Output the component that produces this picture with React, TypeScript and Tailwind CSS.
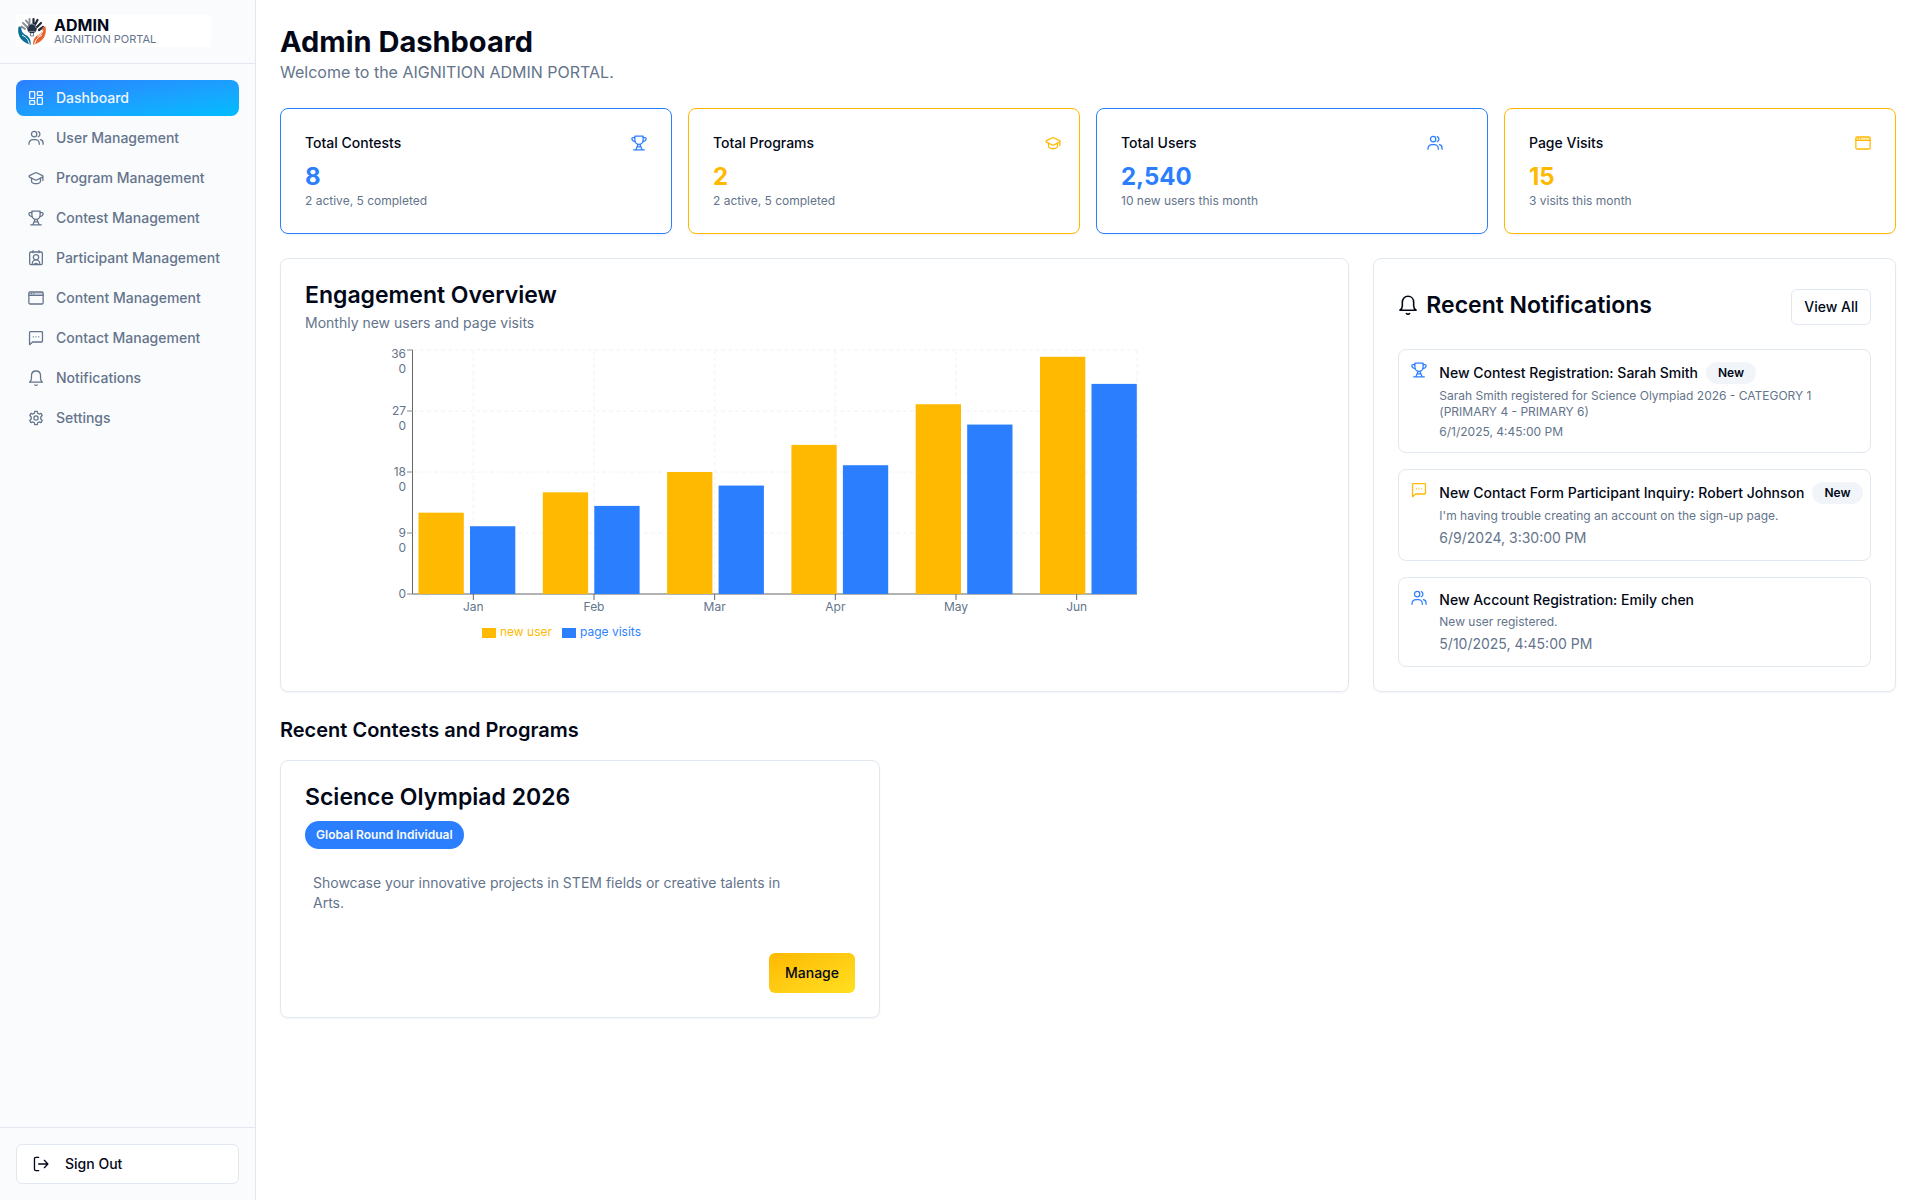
import type { ReactNode } from "react";

type IconProps = { className?: string };

function Icon({ className = "size-4", children }: IconProps & { children: ReactNode }) {
  return (
    <svg
      viewBox="0 0 24 24"
      fill="none"
      stroke="currentColor"
      strokeWidth="1.9"
      strokeLinecap="round"
      strokeLinejoin="round"
      aria-hidden="true"
      className={`shrink-0 ${className}`}
    >
      {children}
    </svg>
  );
}

const DashboardIcon = (p: IconProps) => (
  <Icon {...p}>
    <rect x="2.5" y="2.5" width="7.5" height="10" rx="1" />
    <rect x="14" y="2.5" width="7.5" height="5.5" rx="1" />
    <rect x="14" y="11.5" width="7.5" height="10" rx="1" />
    <rect x="2.5" y="16" width="7.5" height="5.5" rx="1" />
  </Icon>
);

const UsersIcon = (p: IconProps) => (
  <Icon {...p}>
    <circle cx="9.2" cy="6.2" r="4" />
    <path d="M1.5 21.5v-1.2a6 6 0 0 1 6-6h3.4a6 6 0 0 1 6 6v1.2" />
    <path d="M15.5 2.4a4.2 4.2 0 0 1 0 7.6M18.6 14.6a5 5 0 0 1 4 5v1.9" />
  </Icon>
);

const CapIcon = (p: IconProps) => (
  <Icon {...p}>
    <path d="M22.3 10.4v5.4M5.3 12.5v4.3c0 1.9 3 3.7 6.7 3.7s6.700-1.800 6.700-3.700v-4.300" />
    <path d="M11 4.200a2.500 2.500 0 0 1 2 0l8.700 4.300c.900.500.900 1.700 0 2.200L13 15a2.500 2.500 0 0 1-2 0L2.300 10.700c-.900-.500-.900-1.700 0-2.200Z" />
  </Icon>
);

const TrophyIcon = (p: IconProps) => (
  <Icon {...p}>
    <path d="M5.800 1.800h12.400v5.400c0 4-2.600 7-6.200 7s-6.200-3-6.200-7Z" />
    <path d="M5.800 3.800H3a1.700 1.700 0 0 0-1.700 1.900C1.500 7.800 3.200 9.500 6 9.800M18.200 3.800H21a1.700 1.700 0 0 1 1.700 1.900c-.2 2.100-1.900 3.800-4.700 4.100" />
    <path d="M10.600 14.200 7.300 22M13.400 14.200l3.300 7.800M4 22.200h16M9.300 17.800h5.400" />
  </Icon>
);

const BadgeIcon = (p: IconProps) => (
  <Icon {...p}>
    <rect x="2.500" y="3" width="19" height="19" rx="1.800" />
    <path d="M7.500 1v3M16.500 1v3" />
    <circle cx="12" cy="11" r="4" />
    <path d="M6.300 21.500v-1.200c0-2.500 1.500-4.300 3.500-5.300M17.700 21.500v-1.200c0-2.500-1.500-4.300-3.500-5.300M8.500 21.500l3.500-1.500 3.500 1.500" />
  </Icon>
);

const WindowIcon = (p: IconProps) => (
  <Icon {...p}>
    <rect x="1.300" y="3" width="21.400" height="18" rx="1.800" />
    <path d="M1.500 8.200h21M5 5.600h.100M8.500 5.600h.100" />
    <path d="M2 5.600h20" strokeWidth="3" opacity="0.350" />
  </Icon>
);

const ChatIcon = (p: IconProps) => (
  <Icon {...p}>
    <path d="M3.500 2.500h17a1.200 1.200 0 0 1 1.200 1.200v13.100a1.200 1.200 0 0 1-1.200 1.200H7l-4.700 4V3.700a1.200 1.200 0 0 1 1.200-1.200Z" />
    <path d="M8 10.300h.100M12 10.300h.100M16 10.300h.100" strokeWidth="2" />
  </Icon>
);

const BellIcon = (p: IconProps) => (
  <Icon {...p}>
    <path d="M2.300 18.300c1.900-1.300 2.900-3 2.900-5.500V8.700C5.200 4.500 8 1.500 12 1.500s6.800 3 6.800 7.200v4.100c0 2.500 1 4.200 2.900 5.500Z" />
    <path d="M10.200 22.300a2.800 2.800 0 0 0 3.600 0" />
  </Icon>
);

const GearIcon = (p: IconProps) => (
  <Icon {...p}>
    <path d="M10.100 1.900h3.800l.600 3 2.100 1.200 2.900-1 1.900 3.300-2.300 2v3.200l2.300 2-1.900 3.300-2.900-1-2.100 1.200-.600 3h-3.800l-.600-3-2.100-1.200-2.900 1-1.900-3.300 2.300-2v-3.200l-2.300-2 1.900-3.300 2.900 1 2.100-1.200Z" />
    <circle cx="12" cy="12" r="3.200" />
  </Icon>
);

const SignOutIcon = (p: IconProps) => (
  <Icon {...p}>
    <path d="M8.500 2H4.200a2 2 0 0 0-2 2v16a2 2 0 0 0 2 2h4.300M8.500 12H22M17 6.500l5.300 5.500-5.300 5.500" strokeWidth="2" />
  </Icon>
);

function Logo() {
  return (
    <svg viewBox="0 0 32 32" className="size-8 shrink-0" aria-hidden="true">
      <g fill="none" stroke="#8b8f98" strokeWidth="2" strokeLinecap="round">
        <path d="M5.500 11.500 9 14M7 8l4 4M10 5.500l3.500 4.500M13.500 4v4" />
      </g>
      <g fill="none" stroke="#1f2937" strokeWidth="2.200" strokeLinecap="round">
        <path d="M17.500 4v4M21.500 5l-2.500 4.500M25 8l-4 4M27 12l-4 3" />
      </g>
      <circle cx="16" cy="13.500" r="4.800" fill="#263241" />
      <path d="M12 13a4 4 0 0 1 8 0M13 16.500h6M14.500 18v3h3v-3" fill="none" stroke="#7d8794" strokeWidth="1" />
      <path d="M2.600 11.500C.800 19 4 27 14.800 29.800c.300-5.300-1.800-8.500-6-10.300-2.800-1.700-3.700-4.300-3.400-7.500Z" fill="#0e6f96" />
      <path d="M6 20c2.800 1.400 6.500 4 7.300 9" fill="none" stroke="#fff" strokeWidth="1" />
      <path d="M29.400 11.500c1.800 7.500-1.400 15.500-12.200 18.300-.3-5.300 1.800-8.500 6-10.300 2.800-1.700 3.700-4.300 3.400-7.500Z" fill="#e8622a" />
      <path d="M26 20c-2.800 1.400-6.500 4-7.300 9M27 15.500c-1 3-3 4.500-5.500 6" fill="none" stroke="#fff" strokeWidth="1" />
    </svg>
  );
}

const navItems = [
  { label: "Dashboard", icon: DashboardIcon, active: true },
  { label: "User Management", icon: UsersIcon },
  { label: "Program Management", icon: CapIcon },
  { label: "Contest Management", icon: TrophyIcon },
  { label: "Participant Management", icon: BadgeIcon },
  { label: "Content Management", icon: WindowIcon },
  { label: "Contact Management", icon: ChatIcon },
  { label: "Notifications", icon: BellIcon },
  { label: "Settings", icon: GearIcon },
];

function Sidebar() {
  return (
    <aside className="flex w-64 shrink-0 flex-col border-r border-[#e2e8f0] bg-[#fafbfd]">
      <div className="border-b border-[#e2e8f0] px-4 pt-[15px] pb-4">
        <div className="mr-7 flex h-8 items-center gap-1.5 bg-white">
          <Logo />
          <div>
            <p className="text-base leading-4 font-bold">ADMIN</p>
            <p className="text-[11px] leading-3 text-[#64748b]">AIGNITION PORTAL</p>
          </div>
        </div>
      </div>
      <nav className="flex flex-1 flex-col gap-1 p-4">
        {navItems.map(({ label, icon: NavIcon, active }) => (
          <a
            key={label}
            href="#"
            aria-current={active ? "page" : undefined}
            className={`flex items-center gap-3 rounded-lg px-3 py-2 text-sm font-medium ${
              active ? "bg-linear-to-br from-[#2b7fff] to-[#00bcff] text-[#f0f6ff]" : "text-[#64748b]"
            }`}
          >
            <NavIcon />
            {label}
          </a>
        ))}
      </nav>
      <div className="border-t border-[#e2e8f0] p-4">
        <button
          type="button"
          className="flex h-10 w-full items-center gap-4 rounded-md border border-[#e2e8f0] bg-white px-4 text-sm font-medium"
        >
          <SignOutIcon />
          Sign Out
        </button>
      </div>
    </aside>
  );
}

const stats = [
  { title: "Total Contests", value: "8", note: "2 active, 5 completed", icon: TrophyIcon, tone: "blue", iconClass: "size-4" },
  { title: "Total Programs", value: "2", note: "2 active, 5 completed", icon: CapIcon, tone: "amber", iconClass: "size-4 -mr-1.5" },
  { title: "Total Users", value: "2,540", note: "10 new users this month", icon: UsersIcon, tone: "blue", iconClass: "size-4 mr-5" },
  { title: "Page Visits", value: "15", note: "3 visits this month", icon: WindowIcon, tone: "amber", iconClass: "size-4" },
];

function StatCards() {
  return (
    <section className="grid grid-cols-4 gap-4">
      {stats.map(({ title, value, note, icon: StatIcon, tone, iconClass }) => {
        const blue = tone === "blue";
        return (
          <div
            key={title}
            className={`rounded-lg border p-6 shadow-xs ${blue ? "border-[#2b7fff] text-[#2b7fff]" : "border-[#ffb900] text-[#ffb900]"}`}
          >
            <div className="flex items-center justify-between pb-2">
              <h2 className="text-sm font-medium text-[#020817]">{title}</h2>
              <StatIcon className={iconClass} />
            </div>
            <p className="text-2xl font-bold">{value}</p>
            <p className="text-xs text-[#64748b]">{note}</p>
          </div>
        );
      })}
    </section>
  );
}

const months = [
  { name: "Jan", users: 120, visits: 100 },
  { name: "Feb", users: 150, visits: 130 },
  { name: "Mar", users: 180, visits: 160 },
  { name: "Apr", users: 220, visits: 190 },
  { name: "May", users: 280, visits: 250 },
  { name: "Jun", users: 350, visits: 310 },
];

const plot = { left: 28, right: 752, top: 5, bottom: 249, max: 360 };

function EngagementChart() {
  const y = (v: number) => plot.bottom - (v / plot.max) * (plot.bottom - plot.top);
  const band = (plot.right - plot.left) / months.length;
  const ticks = [360, 270, 180, 90, 0];
  return (
    <svg
      viewBox="0 0 760 300"
      className="w-full max-w-[760px] text-xs"
      role="img"
      aria-label="New users and page visits per month"
    >
      <g stroke="#f1f2f4" strokeDasharray="4 3">
        {ticks.slice(0, 4).map((t) => (
          <line key={t} x1={plot.left} x2={plot.right} y1={y(t)} y2={y(t)} />
        ))}
        {months.map((m, i) => (
          <line key={m.name} x1={plot.left + band * (i + 0.5)} x2={plot.left + band * (i + 0.5)} y1={plot.top} y2={plot.bottom} />
        ))}
        <line x1={plot.right} x2={plot.right} y1={plot.top} y2={plot.bottom} />
      </g>
      <path d={`M${plot.left - 0.5} ${plot.top}V${plot.bottom}`} stroke="#666" />
      <path d={`M${plot.left} ${plot.bottom}H${plot.right}`} stroke="#999" strokeWidth="1.5" />
      {ticks.map((t) => (
        <g key={t}>
          <line x1={plot.left - 6} x2={plot.left} y1={y(t)} y2={y(t)} stroke="#888" />
          <text x={plot.left - 7} y={y(t) + (t === 360 ? 8 : 4)} textAnchor="end" fill="#64748b">
            <tspan>{t ? t / 10 : 0}</tspan>
            {t > 0 && (
              <tspan x={plot.left - 7} dy="15">
                0
              </tspan>
            )}
          </text>
        </g>
      ))}
      {months.map((m, i) => {
        const x = plot.left + 5.5 + i * 124.3;
        const center = plot.left + band * (i + 0.5);
        return (
          <g key={m.name}>
            <rect x={x} y={y(m.users)} width="45.3" height={plot.bottom - y(m.users)} fill="#ffb900" />
            <rect x={x + 51.5} y={y(m.visits)} width="45.3" height={plot.bottom - y(m.visits)} fill="#2b7fff" />
            <line x1={center} x2={center} y1={plot.bottom} y2={plot.bottom + 6} stroke="#666" />
            <text x={center} y={plot.bottom + 17} textAnchor="middle" fill="#64748b">
              {m.name}
            </text>
          </g>
        );
      })}
      <rect x="97" y="283" width="14" height="10" fill="#ffb900" />
      <text x="115" y="291" fill="#ffb900">
        new user
      </text>
      <rect x="177" y="283" width="14" height="10" fill="#2b7fff" />
      <text x="195" y="291" fill="#2b7fff">
        page visits
      </text>
    </svg>
  );
}

const notifications = [
  {
    title: "New Contest Registration: Sarah Smith",
    body: "Sarah Smith registered for Science Olympiad 2026 - CATEGORY 1 (PRIMARY 4 - PRIMARY 6)",
    time: "6/1/2025, 4:45:00 PM",
    timeClass: "text-xs",
    icon: TrophyIcon,
    iconClass: "size-4 text-[#2b7fff]",
    isNew: true,
  },
  {
    title: "New Contact Form Participant Inquiry: Robert Johnson",
    body: "I'm having trouble creating an account on the sign-up page.",
    time: "6/9/2024, 3:30:00 PM",
    timeClass: "text-sm",
    icon: ChatIcon,
    iconClass: "size-4 text-[#ffb900]",
    isNew: true,
  },
  {
    title: "New Account Registration: Emily chen",
    body: "New user registered.",
    time: "5/10/2025, 4:45:00 PM",
    timeClass: "text-sm",
    icon: UsersIcon,
    iconClass: "size-4 text-[#2b7fff]",
    isNew: false,
  },
];

function Notifications() {
  return (
    <section className="min-w-0 rounded-lg border border-[#e2e8f0] p-6 shadow-xs">
      <div className="flex items-start justify-between pt-1.5">
        <div className="flex items-center gap-2">
          <BellIcon className="size-5" />
          <h2 className="text-[23px] leading-8 font-semibold">Recent Notifications</h2>
        </div>
        <button type="button" className="h-9 rounded-md border border-[#e2e8f0] px-3 text-sm font-medium">
          View All
        </button>
      </div>
      <ul className="mt-6 flex flex-col gap-4">
        {notifications.map(({ title, body, time, timeClass, icon: ItemIcon, iconClass, isNew }) => (
          <li key={title} className="flex gap-3 rounded-lg border border-[#e2e8f0] p-3">
            <ItemIcon className={iconClass} />
            <div className="flex min-w-0 flex-1 flex-col gap-1 text-[#64748b]">
              <div className="flex items-center gap-2 whitespace-nowrap text-[#020817]">
                <h3 className="text-sm font-medium">{title}</h3>
                {isNew && (
                  <span className="rounded-full bg-[#f1f5f9] px-3 py-[3px] text-xs font-semibold">New</span>
                )}
              </div>
              <p className="text-xs">{body}</p>
              <p className={timeClass}>{time}</p>
            </div>
          </li>
        ))}
      </ul>
    </section>
  );
}

export default function App() {
  return (
    <div className="flex min-h-screen bg-white font-['Inter',sans-serif] text-[#020817]">
      <Sidebar />
      <main className="flex min-w-0 flex-1 flex-col gap-6 p-6">
        <header>
          <h1 className="text-[29px] leading-9 font-bold">Admin Dashboard</h1>
          <p className="text-base text-[#64748b]">Welcome to the AIGNITION ADMIN PORTAL.</p>
        </header>
        <StatCards />
        <div className="grid grid-cols-3 gap-6">
          <section className="col-span-2 rounded-lg border border-[#e2e8f0] p-6 shadow-xs">
            <h2 className="text-[23px] leading-6 font-semibold">Engagement Overview</h2>
            <p className="mt-1.5 text-sm text-[#64748b]">Monthly new users and page visits</p>
            <div className="mt-3 pl-20">
              <EngagementChart />
            </div>
          </section>
          <Notifications />
        </div>
        <section>
          <h2 className="text-xl font-semibold">Recent Contests and Programs</h2>
          <article className="mt-4 flex max-w-[600px] flex-col items-start rounded-lg border border-[#e2e8f0] p-6 shadow-xs">
            <h3 className="text-[23px] leading-6 font-semibold">Science Olympiad 2026</h3>
            <span className="mt-3 rounded-full bg-[#2b7fff] px-[11px] py-1.5 text-xs font-semibold text-[#f8fafc]">
              Global Round Individual
            </span>
            <p className="mt-6 max-w-[488px] pl-2 text-sm text-[#64748b]">
              Showcase your innovative projects in STEM fields or creative talents in Arts.
            </p>
            <button
              type="button"
              className="mt-10 h-10 self-end rounded-md bg-linear-to-br from-[#ffb900] to-[#ffdf20] px-4 text-sm font-medium"
            >
              Manage
            </button>
          </article>
        </section>
      </main>
    </div>
  );
}
